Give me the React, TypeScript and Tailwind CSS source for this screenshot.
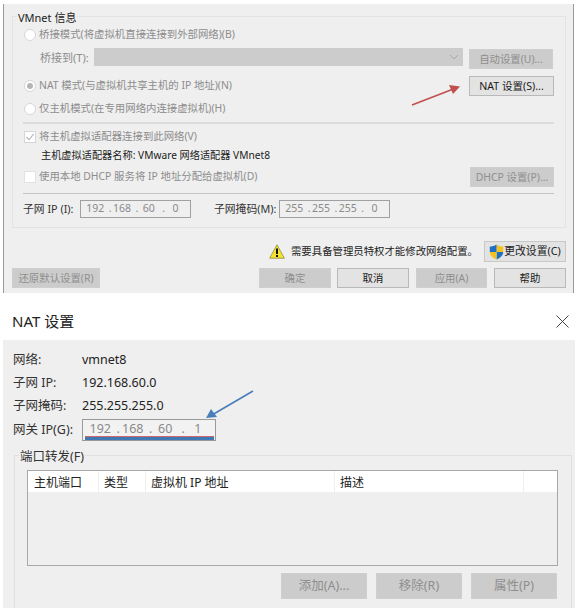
import React from "react";

const font = { fontFamily: '"Noto Sans", "Noto Sans CJK SC", sans-serif' };

const WinButton = ({
  label,
  disabled,
  className = "",
}: {
  label: string;
  disabled?: boolean;
  className?: string;
}) => (
  <div
    className={`flex items-center justify-center leading-none whitespace-nowrap border ${
      disabled
        ? "bg-[#cccccc] border-[#cfcfcf] text-[#8e8e8e]"
        : "bg-[#e3e3e3] border-[#b9b9b9] text-[#1a1a1a]"
    } ${className}`}
  >
    {label}
  </div>
);

const Radio = ({ label, checked }: { label: string; checked?: boolean }) => (
  <div className="flex items-center gap-[3px] h-[16px] text-[10.4px] text-[#8c8c8c] whitespace-nowrap">
    <span className="flex items-center justify-center ml-[1px] w-[12px] h-[12px] rounded-full bg-white border border-[#d6d6d6]">
      {checked && <span className="block w-[6px] h-[6px] rounded-full bg-[#b5b5b5]" />}
    </span>
    {label}
  </div>
);

const IpField = ({ parts, className = "" }: { parts: string[]; className?: string }) => (
  <div className={`flex items-center border border-[#a0a0a0] text-[#8a8a8a] ${className}`}>
    {parts.map((p, i) => (
      <React.Fragment key={i}>
        {i > 0 && <span className="w-0">.</span>}
        <span className="flex-1 text-center">{p}</span>
      </React.Fragment>
    ))}
  </div>
);

const ShieldIcon = () => (
  <svg width="15" height="16" viewBox="0 0 15 16" className="shrink-0">
    <path d="M7.5 0.5 C9.5 2 12 2.6 14.2 2.6 V8 H7.5 Z" fill="#f4c21f" />
    <path d="M7.5 8 H14.2 C14.2 11.5 11 14.2 7.5 15.5 Z" fill="#1d6fc4" />
    <path d="M0.8 8 H7.5 V15.5 C4 14.2 0.8 11.5 0.8 8 Z" fill="#f4c21f" />
    <path d="M0.8 2.6 C3 2.6 5.5 2 7.5 0.5 V8 H0.8 Z" fill="#1d6fc4" />
  </svg>
);

const WarnIcon = () => (
  <svg width="16" height="15" viewBox="0 0 16 15" className="shrink-0">
    <path d="M8 0.8 L15.4 14.2 H0.6 Z" fill="#f7e32a" stroke="#8a8a50" strokeWidth="0.8" />
    <rect x="7" y="4.5" width="2" height="5.5" fill="#111" />
    <rect x="7" y="11" width="2" height="2" fill="#111" />
  </svg>
);

const TopDialog = () => (
  <div className="relative ml-[3px] mr-[1px] mt-[4px] h-[289px] bg-[#efefef] border-x border-[#9a9a9a] pt-[12px] px-[8px]">
    {/* VMnet group */}
    <div className="relative h-[212px] w-[554px] border border-[#e3e3e3] pl-[10px] pr-[11px] pt-[10px]">
      <span className="absolute left-[4px] -top-[7px] bg-[#efefef] px-[1px] text-[11px] leading-[16px] text-[#222]">
        VMnet 信息
      </span>
      <Radio label="桥接模式(将虚拟机直接连接到外部网络)(B)" />
      <div className="flex items-start h-[21px] mt-[5px]">
        <span className="ml-[17px] w-[54px] text-[11px] leading-[20px] text-[#8c8c8c] whitespace-nowrap">
          桥接到(T):
        </span>
        <div className="flex items-center justify-end w-[369px] h-[18px] bg-[#cccccc] pr-[4px]">
          <svg width="10" height="6" viewBox="0 0 10 6">
            <path d="M1 1 L5 5 L9 1" fill="none" stroke="#a8a8a8" strokeWidth="1" />
          </svg>
        </div>
        <WinButton label="自动设置(U)..." disabled className="ml-[6px] mt-[1px] w-[84px] h-[20px] text-[10.4px]" />
      </div>
      <div className="flex items-center justify-between h-[20px] mt-[7px]">
        <Radio label="NAT 模式(与虚拟机共享主机的 IP 地址)(N)" checked />
        <WinButton label="NAT 设置(S)..." className="w-[85px] h-[20px] text-[10.6px]" />
      </div>
      <div className="mt-[5px]">
        <Radio label="仅主机模式(在专用网络内连接虚拟机)(H)" />
      </div>
      <div className="h-[2px] bg-[#dcdcdc] mt-[5px]" />
      <div className="flex items-center gap-[3px] h-[16px] mt-[5px] text-[10.4px] text-[#8c8c8c]">
        <span className="flex items-center justify-center ml-[1px] w-[12px] h-[12px] bg-white border border-[#d6d6d6]">
          <svg width="10" height="10" viewBox="0 0 11 11">
            <path d="M1.5 5.5 L4.5 8.5 L9.5 2" fill="none" stroke="#b5b5b5" strokeWidth="1.2" />
          </svg>
        </span>
        将主机虚拟适配器连接到此网络(V)
      </div>
      <div className="ml-[18px] mt-[2px] h-[16px] text-[10.2px] leading-[16px] text-[#222] whitespace-nowrap">
        主机虚拟适配器名称: VMware 网络适配器 VMnet8
      </div>
      <div className="flex items-center justify-between h-[20px] mt-[4px]">
        <div className="flex items-center gap-[3px] text-[10.4px] text-[#8c8c8c]">
          <span className="ml-[1px] w-[12px] h-[12px] bg-white border border-[#e2e2e2]" />
          使用本地 DHCP 服务将 IP 地址分配给虚拟机(D)
        </div>
        <WinButton label="DHCP 设置(P)..." disabled className="w-[84px] h-[20px] text-[10.4px]" />
      </div>
      <div className="h-px bg-[#c4c4c4] mt-[6px]" />
      <div className="flex items-center h-[18px] mt-[6px] text-[10.8px] text-[#333] whitespace-nowrap">
        <span className="w-[57px]">子网 IP (I):</span>
        <IpField parts={["192", "168", "60", "0"]} className="w-[111px] h-[18px] text-[10.5px] px-px" />
        <span className="ml-[23px] w-[65px]">子网掩码(M):</span>
        <IpField parts={["255", "255", "255", "0"]} className="w-[111px] h-[18px] text-[10.5px] px-px" />
      </div>
    </div>
    {/* admin row */}
    <div className="flex items-center justify-end h-[21px] mt-[13px] w-[554px]">
      <WarnIcon />
      <span className="ml-[6px] text-[10.4px] text-[#222] whitespace-nowrap">
        需要具备管理员特权才能修改网络配置。
      </span>
      <div className="flex items-center justify-center ml-[6px] w-[82px] h-[21px] bg-[#e3e3e3] border border-[#c8c8c8] text-[10.8px] text-[#222] whitespace-nowrap">
        <ShieldIcon />
        更改设置(C)
      </div>
    </div>
    {/* footer buttons */}
    <div className="flex items-center mt-[6px] w-[554px] h-[20px]">
      <WinButton label="还原默认设置(R)" disabled className="w-[88px] h-[20px] text-[10.4px]" />
      <WinButton label="确定" disabled className="ml-[159px] w-[72px] h-[20px] text-[10.4px]" />
      <WinButton label="取消" className="ml-[6px] w-[72px] h-[20px] text-[10.4px]" />
      <WinButton label="应用(A)" disabled className="ml-[7px] w-[71px] h-[20px] text-[10.4px]" />
      <WinButton label="帮助" className="ml-[7px] w-[72px] h-[20px] text-[10.4px]" />
    </div>
  </div>
);

const InfoRow = ({ label, value }: { label: string; value: string }) => (
  <div className="flex items-center h-[23px] text-[12.5px] text-[#222] whitespace-nowrap">
    <span className="w-[69px] text-[#333]">{label}</span>
    <span>{value}</span>
  </div>
);

const NatDialog = () => (
  <div className="bg-white">
    <div className="flex items-center justify-between h-[47px] pl-[12px] pr-[6px] pt-[10px]">
      <span className="text-[15px] text-[#222] whitespace-nowrap">NAT 设置</span>
      <svg width="13" height="13" viewBox="0 0 13 13">
        <path d="M0.5 0.5 L12.5 12.5 M12.5 0.5 L0.5 12.5" stroke="#444" strokeWidth="1" />
      </svg>
    </div>
    <div className="ml-[3px] h-[268px] bg-[#efefef] pt-[9px] pl-[10px]">
      <InfoRow label="网络:" value="vmnet8" />
      <InfoRow label="子网 IP:" value="192.168.60.0" />
      <InfoRow label="子网掩码:" value="255.255.255.0" />
      <div className="flex items-center h-[22px] mt-[1px] text-[12.5px] text-[#333] whitespace-nowrap">
        <span className="w-[69px]">网关 IP(G):</span>
        <div className="relative w-[134px] h-[22px] bg-[#f2f2f2] border border-[#9a9a9a]">
          <IpField
            parts={["192", "168", "60", "1"]}
            className="h-[18px] border-transparent text-[12.5px]"
          />
          <div className="absolute left-[2px] right-[1px] bottom-0 h-[4px] bg-[#3f78b5] border-t border-[#c9686d]" />
        </div>
      </div>
      {/* port forwarding group */}
      <div className="relative mt-[14px] ml-[1px] w-[558px] h-[160px] border-l border-r border-t border-[#e0e0e0] pl-[12px] pt-[14px]">
        <span className="absolute left-[4px] -top-[8px] bg-[#efefef] px-[1px] text-[12.5px] leading-[17px] text-[#333]">
          端口转发(F)
        </span>
        <div className="w-[531px] h-[96px] border border-[#a5a9ae]">
          <div className="flex h-[21px] bg-white text-[12px] leading-[23px] text-[#222] whitespace-nowrap">
            <span className="w-[71px] pl-[6px] border-r border-[#efefef]">主机端口</span>
            <span className="w-[47px] pl-[5px] border-r border-[#efefef]">类型</span>
            <span className="w-[189px] pl-[5px] border-r border-[#efefef]">虚拟机 IP 地址</span>
            <span className="w-[189px] pl-[5px] border-r border-[#efefef]">描述</span>
          </div>
        </div>
        <div className="flex justify-end gap-[9px] w-[530px] mt-[7px]">
          <WinButton label="添加(A)..." disabled className="w-[86px] h-[26px] text-[12.5px]" />
          <WinButton label="移除(R)" disabled className="w-[86px] h-[26px] text-[12.5px]" />
          <WinButton label="属性(P)" disabled className="w-[86px] h-[26px] text-[12.5px]" />
        </div>
      </div>
    </div>
  </div>
);

export default function App() {
  return (
    <div className="relative w-[575px] h-[608px] bg-white overflow-hidden" style={font}>
      <TopDialog />
      <NatDialog />
      {/* annotation arrows */}
      <svg className="absolute left-0 top-0 pointer-events-none" width="575" height="608">
        <path d="M412 105 L456 88" stroke="#c0504d" strokeWidth="1.6" fill="none" />
        <path d="M449 85 L460 86.5 L453 94 Z" fill="#c0504d" />
        <path d="M253 391 L212 415" stroke="#4a7ebb" strokeWidth="1.6" fill="none" />
        <path d="M206 418 L211 409 L217 417 Z" fill="#4a7ebb" />
      </svg>
    </div>
  );
}
